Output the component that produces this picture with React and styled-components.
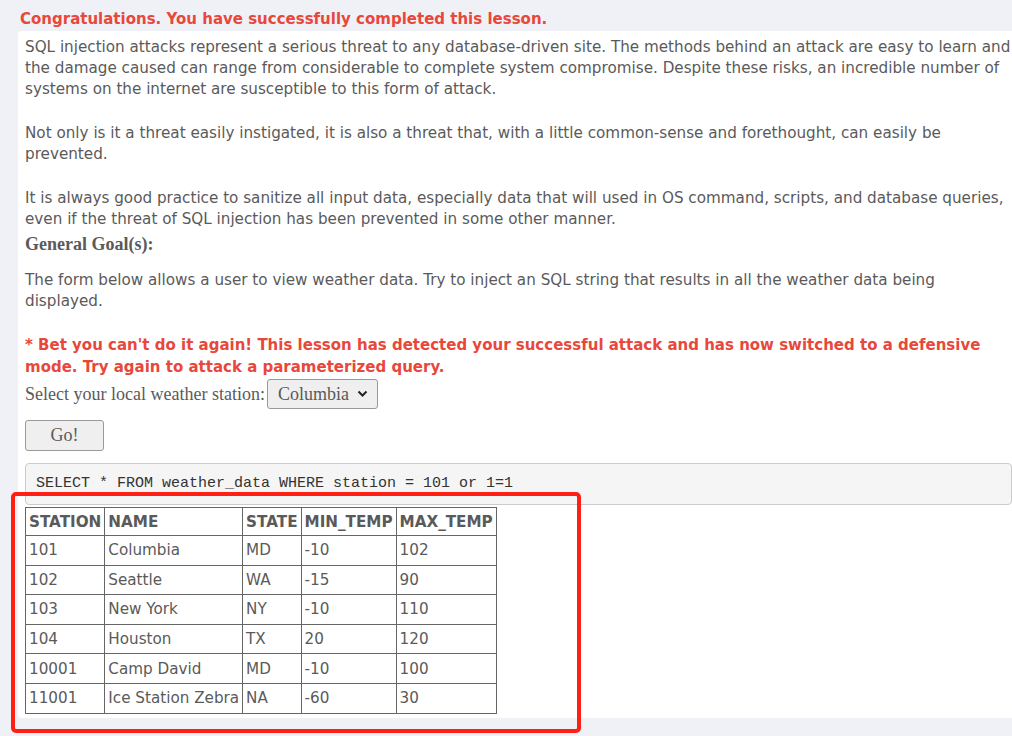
import styled, { createGlobalStyle } from 'styled-components'

const GlobalStyle = createGlobalStyle`
    html, body {
        margin: 0;
        padding: 0;
        background: #f0f1f6;
        overflow: hidden;
    }
`

const Page = styled.div`
    position: relative;
    width: 1012px;
    height: 736px;
    padding: 8px 0 0 18px;
    box-sizing: border-box;
    font-family: "DejaVu Sans", sans-serif;
    color: #5a5a5a;
`

const Heading = styled.div`
    margin-left: 2px;
    height: 23px;
    line-height: 23px;
    font-size: 15px;
    font-weight: bold;
    color: #e8483b;
`

const Panel = styled.div`
    width: 1010px;
    height: 687px;
    background: #fff;
    border-radius: 4px;
    padding: 6px 0 0 7px;
    box-sizing: border-box;
`

const Content = styled.div`
    width: 987px;
`

const Para = styled.p`
    margin: 0 0 23px;
    font-size: 15.2px;
    line-height: 21px;
    color: ${p => (p.$warn ? '#e8483b' : '#5a5a5a')};
    font-weight: ${p => (p.$warn ? 'bold' : 'normal')};
    ${p => p.$warn && 'font-size: 15px; line-height: 22px; margin: -1px 0 1px;'}
    ${p => p.$tight && 'margin-bottom: 2px;'}
`

const Goal = styled.div`
    font-family: "Liberation Serif", serif;
    font-size: 18px;
    line-height: 24px;
    font-weight: bold;
    margin: 0 0 14px;
`

const FormRow = styled.div`
    display: flex;
    align-items: center;
    gap: 2px;
    font-family: "Liberation Serif", serif;
    font-size: 18px;
    height: 30px;
`

const SelectBox = styled.div`
    display: flex;
    align-items: center;
    justify-content: space-between;
    width: 111px;
    height: 30px;
    padding: 0 9px 0 10px;
    box-sizing: border-box;
    border: 1px solid #999;
    border-radius: 3px;
    background: #efefef;
    color: #5a5a5a;
`

const GoButton = styled.button`
    display: block;
    margin-top: 11px;
    width: 79px;
    height: 31px;
    border: 1px solid #999;
    border-radius: 3px;
    background: #efefef;
    font-family: "Liberation Serif", serif;
    font-size: 18px;
    color: #5a5a5a;
`

const Query = styled.pre`
    margin: 12px 0 2px;
    height: 42px;
    box-sizing: border-box;
    padding: 11px 10px 0;
    background: #f5f5f5;
    border: 1px solid #ccc;
    border-radius: 4px;
    font-family: "Liberation Mono", monospace;
    font-size: 15px;
    line-height: 18px;
    color: #333;
`

const Table = styled.table`
    border-collapse: collapse;
    font-size: 15.2px;
`

const Th = styled.th`
    border: 1px solid #666;
    text-align: left;
    padding: 0 3px;
    height: 27px;
    font-weight: bold;
`

const Td = styled.td`
    border: 1px solid #666;
    padding: 0 3px;
    height: 28.6px;
    white-space: nowrap;
`

const Highlight = styled.div`
    position: absolute;
    left: 11px;
    top: 492px;
    width: 570px;
    height: 241px;
    box-sizing: border-box;
    border: 4px solid #ff2015;
    border-radius: 5px;
    pointer-events: none;
`

const cols = ['STATION', 'NAME', 'STATE', 'MIN_TEMP', 'MAX_TEMP']

const rows = [
    ['101', 'Columbia', 'MD', '-10', '102'],
    ['102', 'Seattle', 'WA', '-15', '90'],
    ['103', 'New York', 'NY', '-10', '110'],
    ['104', 'Houston', 'TX', '20', '120'],
    ['10001', 'Camp David', 'MD', '-10', '100'],
    ['11001', 'Ice Station Zebra', 'NA', '-60', '30'],
]

const Chevron = () => (
    <svg width="11" height="8" viewBox="0 0 11 8">
        <path d="M1.5 1.5 L5.5 5.5 L9.5 1.5" fill="none" stroke="#222" strokeWidth="2" />
    </svg>
)

const App = () => {
    return (
        <Page>
            <GlobalStyle />
            <Heading>Congratulations. You have successfully completed this lesson.</Heading>
            <Panel>
                <Content>
                    <Para>
                        SQL injection attacks represent a serious threat to any database-driven site. The methods behind an attack are easy to learn and the damage caused can range from considerable to complete system compromise. Despite these risks, an incredible number of systems on the internet are susceptible to this form of attack.
                    </Para>
                    <Para>
                        Not only is it a threat easily instigated, it is also a threat that, with a little common-sense and forethought, can easily be prevented.
                    </Para>
                    <Para $tight>
                        It is always good practice to sanitize all input data, especially data that will used in OS command, scripts, and database queries, even if the threat of SQL injection has been prevented in some other manner.
                    </Para>
                    <Goal>General Goal(s):</Goal>
                    <Para>
                        The form below allows a user to view weather data. Try to inject an SQL string that results in all the weather data being displayed.
                    </Para>
                    <Para $warn>
                        * Bet you can't do it again! This lesson has detected your successful attack and has now switched to a defensive mode. Try again to attack a parameterized query.
                    </Para>
                    <FormRow>
                        <span>Select your local weather station:</span>
                        <SelectBox>
                            <span>Columbia</span>
                            <Chevron />
                        </SelectBox>
                    </FormRow>
                    <GoButton>Go!</GoButton>
                    <Query>SELECT * FROM weather_data WHERE station = 101 or 1=1</Query>
                    <Table>
                        <thead>
                            <tr>
                                {cols.map(c => (
                                    <Th key={c}>{c}</Th>
                                ))}
                            </tr>
                        </thead>
                        <tbody>
                            {rows.map(r => (
                                <tr key={r[0]}>
                                    {r.map((v, i) => (
                                        <Td key={i}>{v}</Td>
                                    ))}
                                </tr>
                            ))}
                        </tbody>
                    </Table>
                </Content>
            </Panel>
            <Highlight />
        </Page>
    )
}

export default App
